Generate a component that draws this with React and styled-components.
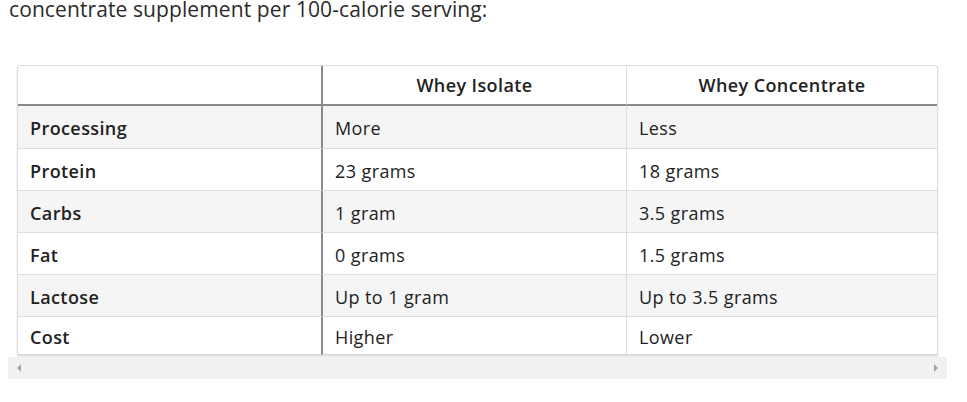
import React from 'react';
import styled, { createGlobalStyle } from 'styled-components';

const GlobalStyle = createGlobalStyle`
  body {
    margin: 0;
    background: #ffffff;
    font-family: "Open Sans", "Liberation Sans", sans-serif;
    color: #222;
  }
`;

const Page = styled.div`
  padding: 0 20px 0 8px;
`;

const Intro = styled.p`
  margin: -6px 0 0 1px;
  font-size: 21px;
  line-height: 30px;
  letter-spacing: 0.1px;
  color: #2b2b2b;
`;

const Scroller = styled.div`
  margin-top: 41px;
  width: 939px;
`;

const TableWrap = styled.div`
  padding: 0 9px 2px;
`;

const Table = styled.table`
  width: 100%;
  border-collapse: separate;
  border-spacing: 0;
  border: 1px solid #dcdcdc;
  border-bottom: none;
  border-radius: 3px 3px 0 0;
  box-shadow: 0 2px 2px rgba(0, 0, 0, 0.12);
  font-size: 18px;
  letter-spacing: 0.4px;
  table-layout: fixed;
`;

const Th = styled.th`
  box-sizing: border-box;
  height: 40px;
  padding: 0 12px;
  font-weight: 600;
  text-align: center;
  border-bottom: 2px solid #8a8a8a;
  border-left: ${p => (p.$thick ? '2px solid #8a8a8a' : p.$first ? 'none' : '1px solid #dcdcdc')};
  width: ${p => (p.$w ? `${p.$w}px` : 'auto')};
`;

const Tr = styled.tr`
  background: ${p => (p.$shade ? '#f5f5f5' : '#ffffff')};
`;

const Td = styled.td`
  box-sizing: border-box;
  height: ${p => (p.$last ? 39 : 42)}px;
  padding: ${p => (p.$last ? '3px 12px 0' : '2px 12px 0')};
  vertical-align: middle;
  font-weight: ${p => (p.$label ? 600 : 400)};
  border-top: ${p => (p.$top ? '1px solid #dedede' : 'none')};
  border-bottom: ${p => (p.$last ? '1px solid #d6d6d6' : 'none')};
  border-left: ${p => (p.$thick ? '2px solid #8a8a8a' : p.$label ? 'none' : '1px solid #dcdcdc')};
  color: #222;
`;

const ScrollBar = styled.div`
  height: 22px;
  background: #f1f1f1;
  display: flex;
  align-items: center;
  justify-content: space-between;
  padding: 0 9px;
`;

const Arrow = styled.span`
  width: 0;
  height: 0;
  border-top: 4px solid transparent;
  border-bottom: 4px solid transparent;
  ${p => (p.$dir === 'left' ? 'border-right: 4px solid #a3a3a3;' : 'border-left: 4px solid #a3a3a3;')}
`;

const rows = [
  ['Processing', 'More', 'Less'],
  ['Protein', '23 grams', '18 grams'],
  ['Carbs', '1 gram', '3.5 grams'],
  ['Fat', '0 grams', '1.5 grams'],
  ['Lactose', 'Up to 1 gram', 'Up to 3.5 grams'],
  ['Cost', 'Higher', 'Lower'],
];

export default function App() {
  return (
    <Page>
      <GlobalStyle />
      <Intro>concentrate supplement per 100-calorie serving:</Intro>
      <Scroller>
        <TableWrap>
          <Table>
            <thead>
              <tr>
                <Th $first $w={303} />
                <Th $thick $w={305}>Whey Isolate</Th>
                <Th>Whey Concentrate</Th>
              </tr>
            </thead>
            <tbody>
              {rows.map((r, i) => {
                const last = i === rows.length - 1;
                return (
                  <Tr key={r[0]} $shade={i % 2 === 0}>
                    <Td $label $top={i > 0} $last={last}>{r[0]}</Td>
                    <Td $thick $top={i > 0} $last={last}>{r[1]}</Td>
                    <Td $top={i > 0} $last={last}>{r[2]}</Td>
                  </Tr>
                );
              })}
            </tbody>
          </Table>
        </TableWrap>
        <ScrollBar>
          <Arrow $dir="left" />
          <Arrow $dir="right" />
        </ScrollBar>
      </Scroller>
    </Page>
  );
}
